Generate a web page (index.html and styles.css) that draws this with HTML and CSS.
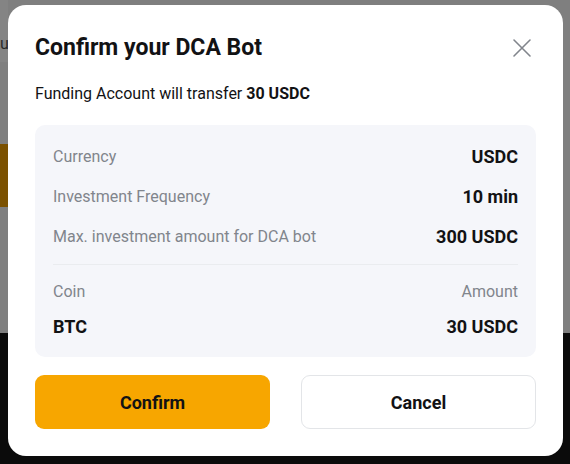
FILE: index.html
```html
<!DOCTYPE html>
<html>
<head>
<meta charset="utf-8">
<link rel="stylesheet" href="styles.css">
</head>
<body>
<div class="page">
  <div class="backdrop-top">
    <div class="frag">ur</div>
    <div class="band"></div>
  </div>
  <div class="backdrop-bottom"></div>
</div>
<div class="modal">
  <div class="header">
    <h1 class="title">Confirm your DCA Bot</h1>
    <span class="close">
      <svg width="24" height="24" viewBox="0 0 24 24"><path d="M4 4L20 20M20 4L4 20" stroke="#81858c" stroke-width="1.6" fill="none" stroke-linecap="round"/></svg>
    </span>
  </div>
  <p class="sub">Funding Account will transfer <b>30 USDC</b></p>
  <div class="card">
    <div class="row"><span class="label">Currency</span><span class="value">USDC</span></div>
    <div class="row"><span class="label">Investment Frequency</span><span class="value">10 min</span></div>
    <div class="row"><span class="label">Max. investment amount for DCA bot</span><span class="value">300 USDC</span></div>
    <div class="divider"></div>
    <div class="row head"><span class="label">Coin</span><span class="label">Amount</span></div>
    <div class="row coin"><span class="value">BTC</span><span class="value">30 USDC</span></div>
  </div>
  <div class="actions">
    <button class="btn primary">Confirm</button>
    <button class="btn secondary">Cancel</button>
  </div>
</div>
</body>
</html>
```
FILE: styles.css
```css
* { box-sizing: border-box; }
html, body { margin: 0; padding: 0; }
body {
  width: 570px;
  height: 464px;
  overflow: hidden;
  position: relative;
  font-family: Roboto, "Liberation Sans", sans-serif;
  color: #121214;
}
.page { width: 570px; height: 464px; display: flex; flex-direction: column; }
.backdrop-top { height: 333px; background: #7f7f7f; display: flex; flex-direction: column; }
.frag { height: 62px; padding-top: 34px; font-size: 16px; color: #2a2a2a; background: #848484; width: 8px; overflow: hidden; line-height: 20px; }
.band { margin-top: 82px; height: 63px; width: 8px; background: #7b5100; }
.backdrop-bottom { flex: 1; background: #0b0b0b; }

.modal {
  position: absolute;
  left: 8px;
  top: 5px;
  width: 555px;
  height: 451px;
  background: #fff;
  border-radius: 18px;
  padding: 27px 27px 27px 27px;
  display: flex;
  flex-direction: column;
}
.header { display: flex; justify-content: space-between; align-items: center; height: 32px; }
.title { margin: 0; font-size: 23px; font-weight: 700; line-height: 32px; color: #121214; }
.close { width: 24px; height: 24px; display: block; margin-right: 2px; }
.close svg { display: block; }
.sub { margin: 18px 0 0; font-size: 16px; line-height: 24px; color: #121214; }
.sub b { font-weight: 700; }
.card {
  margin-top: 19px;
  background: #f5f6fa;
  border-radius: 10px;
  padding: 19px 18px;
  display: flex;
  flex-direction: column;
  gap: 16px;
}
.row { display: flex; justify-content: space-between; align-items: center; height: 24px; }
.label { font-size: 16px; color: #81858c; }
.value { font-size: 18px; font-weight: 700; color: #121214; }
.divider { height: 1px; background: #eaecef; margin-bottom: -2px; }
.row.coin { margin-top: -5px; }
.actions { margin-top: 18px; display: grid; grid-template-columns: 1fr 1fr; gap: 31px; }
.btn {
  height: 54px;
  border-radius: 9px;
  font-family: inherit;
  font-size: 18px;
  font-weight: 700;
  color: #121214;
  cursor: pointer;
}
.primary { background: #f7a600; border: none; }
.secondary { background: #fff; border: 1px solid #e3e5e8; }
```
